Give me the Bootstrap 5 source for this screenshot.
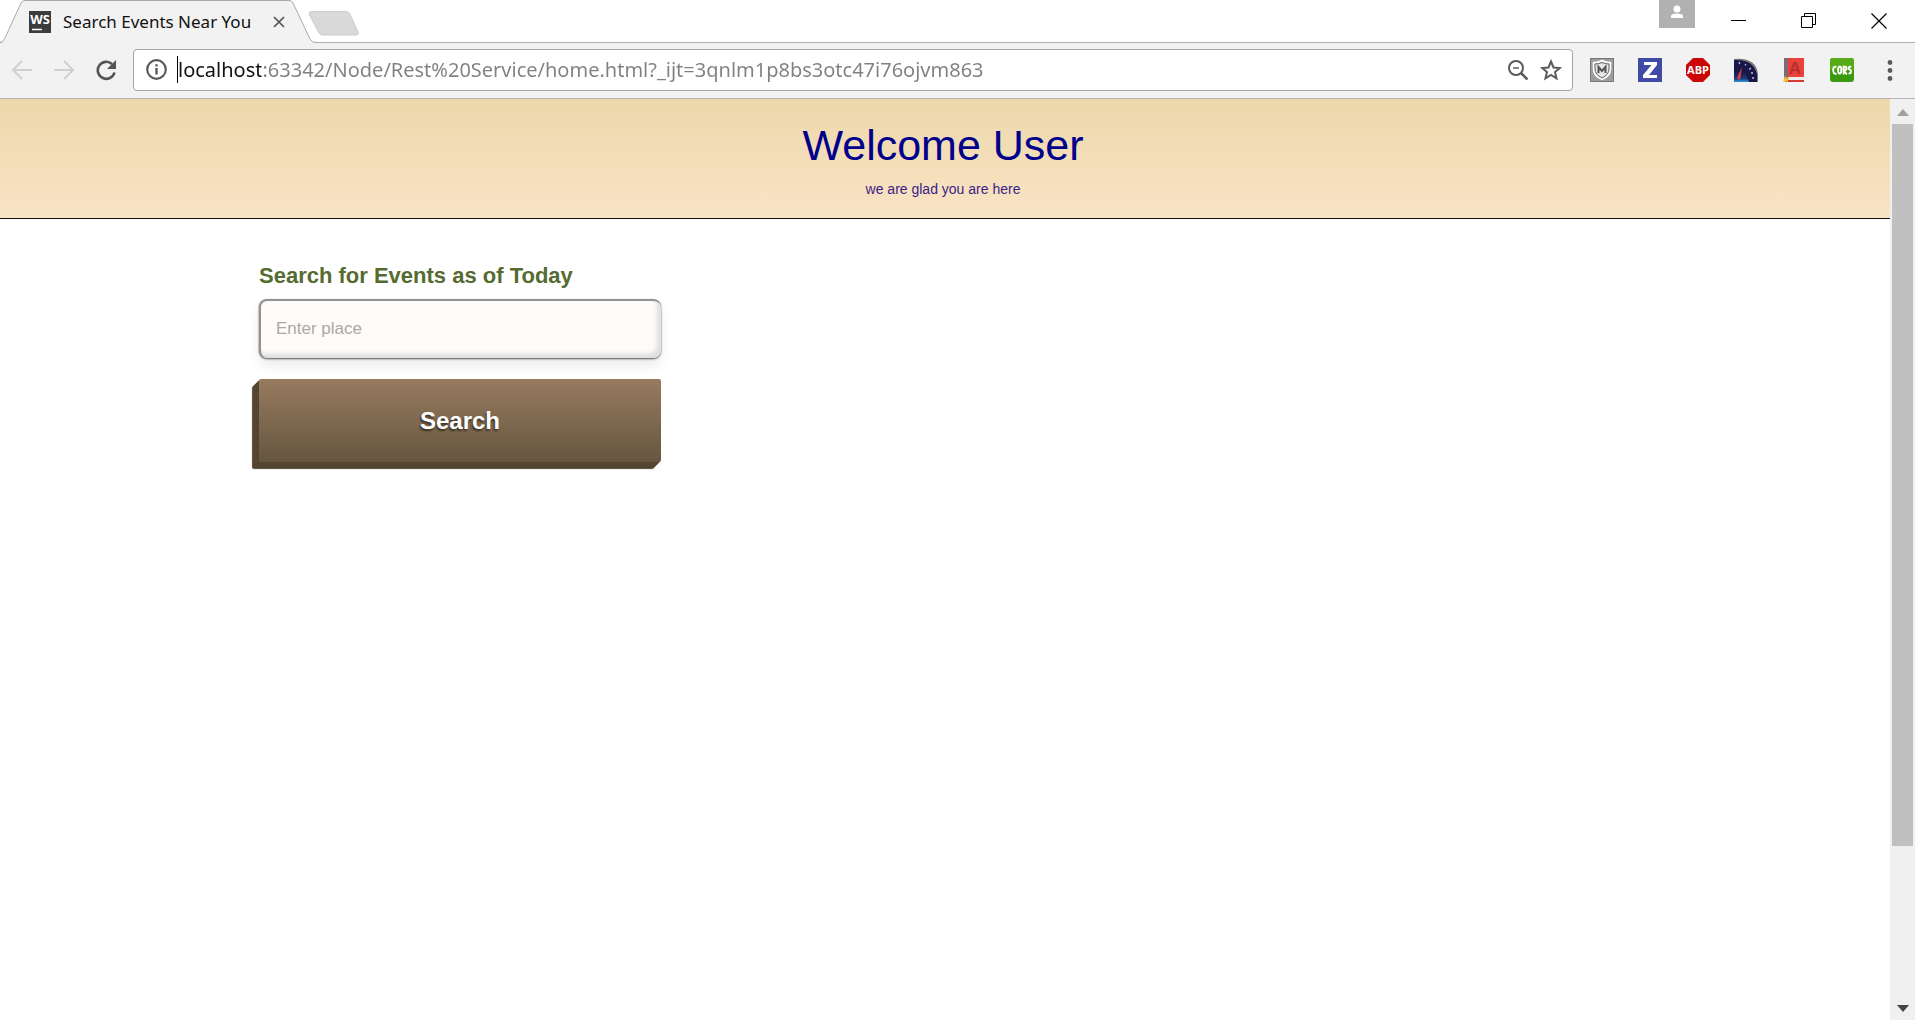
<!DOCTYPE html>
<html lang="en">
<head>
<meta charset="utf-8">
<meta name="viewport" content="width=device-width, initial-scale=1">
<title>Search Events Near You</title>
<link href="https://cdn.jsdelivr.net/npm/bootstrap@5.3.0/dist/css/bootstrap.min.css" rel="stylesheet">
<style>
body{font-family:"Liberation Sans",Arial,sans-serif;background:#fff}
button{border:0;background:none;padding:0}
svg{display:block}
.tab-strip{height:43px;border-bottom:1px solid #b0b0b0;background:#fff}
.page-tab{width:316px;height:43px;padding:0 31px 0 29px;font:17px/24px "Noto Sans",sans-serif;color:#111}
.tab-shape{position:absolute;left:0;top:0;z-index:0}
.page-tab>*:not(.tab-shape){position:relative;z-index:1}
.new-tab{margin:11px 0 0 -8px}
.profile{width:36px;height:28px;background:#b1b1b1}
.win-btns{gap:54px;padding:13px 28px 0 36px}
.toolbar{height:56px;background:#f2f2f2;border-bottom:1px solid #b5b5b5;padding:0 17px 2px 10px}
.nav-btns{gap:18px;width:123px}
.address{height:42px;border:1px solid #a5a5a5;border-radius:4px;background:#fff;padding:0 10px 0 12px}
.caret-bar{width:1px;height:27px;background:#000;margin-left:10px}
.url{border:0;outline:0;padding:0;height:34px;font:20px/34px "Noto Sans",sans-serif;color:transparent;background:linear-gradient(90deg,#111 83px,#808080 83px);-webkit-background-clip:text;background-clip:text}
.bar-icons{gap:12px}
.extensions{gap:24px;padding-left:17px}
.viewport-area{height:calc(100vh - 99px)}
.hero{height:120px;padding:20px 4px 0 0;background:linear-gradient(#edd8ab,#f9e3c6);border-bottom:1px solid #111;color:#00008b}
.hero h1{font-size:43px;line-height:52px;font-weight:400;margin:0}
.hero p{font-size:14px;line-height:20px;margin:8px 0 0;color:#3b1f85}
.page-wrap{max-width:1396px;padding-top:44px}
.search-form{max-width:402px}
.search-form label{font-size:22px;line-height:26px;font-weight:700;color:#556b2f;margin-bottom:10px;white-space:nowrap}
.place{display:block;width:100%;height:59px;padding:0 15px 2px;font-size:17px;color:#444;background:#fffbf8;border:solid #929295;border-width:2px 0 0 2px;border-radius:8px;outline:0;box-shadow:inset -4px -4px 5px #ddd,0 1px 2px #555,0 8px 12px rgba(0,0,0,.08)}
.place::placeholder{color:#a9a9a9}
.go{display:block;width:100%;height:83px;margin-top:21px;border-radius:2px;font-size:24px;font-weight:700;color:#fff;text-shadow:-1px 2px 2px #3d3225;background:linear-gradient(#977b5f,#665640);box-shadow:-1px 1px #534532,-2px 2px #534532,-3px 3px #534532,-4px 4px #534532,-5px 5px #534532,-6px 6px #534532,-7px 7px 1px #534532}
.scroller{width:25px;background:#f0f0f0;padding:10px 2px 8px}
.thumb{width:21px;background:#c0c0c0;margin-top:8px}
</style>
<script src="https://cdn.jsdelivr.net/npm/bootstrap@5.3.0/dist/js/bootstrap.bundle.min.js"></script>
</head>
<body class="overflow-hidden">
<header>
  <div class="tab-strip d-flex align-items-start">
    <div class="page-tab position-relative d-flex align-items-center flex-shrink-0">
      <svg class="tab-shape" width="316" height="43"><path d="M0 43Q4 43 6 38L21 3Q22.500 .5 25 .5H289Q292 .5 293 3L310 39Q312 42.500 316 43Z" fill="#f2f2f2"/><path d="M0 42.500Q3 42.500 5 38L21 3Q22.500 .5 25 .5H289Q292 .5 293 3L310 39Q312 42.500 316 42.500" fill="none" stroke="#a8a8a8"/></svg>
      <svg width="22" height="22" viewBox="0 0 22 22"><path fill="#3c3c3c" d="M0 0h22v22H0z"/><path d="M3 18.500h10" stroke="#fff" stroke-width="1.500"/><text x="11" y="13" text-anchor="middle" font-family="Open Sans" font-weight="bold" font-size="13" fill="#fff">WS</text></svg>
      <span class="flex-grow-1 text-nowrap ps-2 ms-1">Search Events Near You</span>
      <button aria-label="Close tab"><svg width="12" height="12"><path d="M1 1l10 10M11 1L1 11" stroke="#555" stroke-width="1.700"/></svg></button>
    </div>
    <button class="new-tab" aria-label="New tab"><svg width="52" height="25"><path d="M4 .5H38Q41 .5 42 3L50 21Q51 24 48 24H15Q12 24 11 22L1.500 4Q0 .5 4 .5Z" fill="#d9d9d9" stroke="#ccc"/></svg></button>
    <div class="ms-auto d-flex">
      <button class="profile d-flex justify-content-center" aria-label="Profile"><svg class="mt-1" width="14" height="16" viewBox="0 0 14 16" fill="#fff"><circle cx="7" cy="5" r="3.500"/><path d="M1 12Q1 9.500 7 9.500T13 12v2H1z"/></svg></button>
      <div class="win-btns d-flex align-items-start">
        <button aria-label="Minimize"><svg width="16" height="16"><path d="M0 7.500h15" stroke="#000"/></svg></button>
        <button aria-label="Restore"><svg width="16" height="16"><path d="M.5 3.500h11v11H.5zM3.500 3V.5h11v11H12" fill="none" stroke="#000"/></svg></button>
        <button aria-label="Close"><svg width="16" height="16"><path d="M.5.5l15 15m0-15l-15 15" stroke="#000" stroke-width="1.200"/></svg></button>
      </div>
    </div>
  </div>
  <div class="toolbar d-flex align-items-center">
    <div class="nav-btns d-flex align-items-center flex-shrink-0">
      <button aria-label="Back"><svg width="24" height="22" fill="none" stroke="#d0d0d0" stroke-width="2"><path d="M22 11H4M12 2l-9 9 9 9"/></svg></button>
      <button aria-label="Forward"><svg width="24" height="22" fill="none" stroke="#d0d0d0" stroke-width="2"><path d="M2 11h18M12 2l9 9-9 9"/></svg></button>
      <button aria-label="Reload"><svg width="24" height="22" viewBox="0 0 24 22"><path d="M20.500 13.500A8.500 8.500 0 1 1 18 5" fill="none" stroke="#555" stroke-width="2.600"/><path d="M22 1v9h-9z" fill="#555"/></svg></button>
    </div>
    <div class="address d-flex align-items-center flex-grow-1">
      <svg width="21" height="21" viewBox="0 0 21 21"><circle cx="10.500" cy="10.500" r="9.300" fill="none" stroke="#5a5a5a" stroke-width="2.200"/><path d="M9.300 5.300h2.400v2.300H9.300zM9.300 9h2.400v6.500H9.300z" fill="#5a5a5a"/></svg>
      <span class="caret-bar"></span>
      <input class="url flex-grow-1" type="text" aria-label="Address" spellcheck="false" value="localhost:63342/Node/Rest%20Service/home.html?_ijt=3qnlm1p8bs3otc47i76ojvm863">
      <div class="bar-icons d-flex align-items-center">
        <button aria-label="Zoom"><svg width="20" height="20" fill="none" stroke="#5a5a5a"><circle cx="8" cy="8" r="7" stroke-width="2"/><path d="M5 8h6" stroke-width="1.500"/><path d="M13 13l6.500 6.500" stroke-width="2.600"/></svg></button>
        <button aria-label="Bookmark"><svg width="22" height="22" viewBox="0 0 22 22"><path d="M11 2.500l2.500 6 6.300.5-4.800 4.100 1.500 6.200L11 16l-5.500 3.300L7 13.100 2.200 9l6.300-.5z" fill="none" stroke="#5a5a5a" stroke-width="2"/></svg></button>
      </div>
    </div>
    <div class="extensions d-flex align-items-center flex-shrink-0">
      <button aria-label="McAfee"><svg width="24" height="24"><path fill="#777" d="M0 0h24v24H0z"/><path fill="#9c9c9c" d="M1 1h22v22H1z"/><path d="M12 2.500Q16 4.500 20.500 4.500V11Q20.500 18 12 21.500Q3.500 18 3.500 11V4.500Q8 4.500 12 2.500Z" fill="#ddd" stroke="#fff" stroke-width="1.500"/><path d="M12 4.500Q15 6 19 6V11Q19 16.500 12 20Q5 16.500 5 11V6Q9 6 12 4.500Z" fill="#e5e5e5" stroke="#666"/><path d="M8.500 15V9l3.500 4 3.500-4v6" fill="none" stroke="#555" stroke-width="2"/></svg></button>
      <button aria-label="Zotero"><svg width="24" height="24"><path fill="#414aa5" d="M0 0h24v24H0z"/><path d="M6 4h13v3l-8 10h8v3H5v-3L13.500 7H6z" fill="#fff"/></svg></button>
      <button aria-label="Adblock Plus"><svg width="24" height="24"><path d="M7 0h10l7 7v10l-7 7H7l-7-7V7z" fill="#cc0505"/><text x="12" y="16" text-anchor="middle" font-family="Open Sans" font-weight="bold" font-size="11" fill="#fff">ABP</text></svg></button>
      <button aria-label="Speed test"><svg width="24" height="24"><defs><linearGradient id="dial" x2="0" y2="1"><stop stop-color="#15154e"/><stop offset=".7" stop-color="#1b3a78"/><stop offset="1" stop-color="#2a9de0"/></linearGradient></defs><path d="M0 1Q22-1 24 16V24H0Z" fill="#777"/><path d="M0 2Q20 1 23 17V24H0Z" fill="#171748"/><path d="M0 24V13Q11 11 15 24Z" fill="url(#dial)"/><path d="M5 4l.7 2M12 6l-1 1.500M17 10l-2 1.500M19 15h-2M20 20h-2" stroke="#b9bfe8" stroke-width="1.300"/><path d="M8 9L3 20l3 2z" fill="#f23b3b"/></svg></button>
      <button aria-label="Dictionary"><svg width="24" height="24"><path d="M2 0h20v19H2z" fill="#e9413b"/><path d="M2 0h4v23H2z" fill="#7b6d72"/><path d="M6 19h16v3H6z" fill="#eee"/><path d="M5 22h17v2H3z" fill="#d63b32"/><path d="M3 18l2 2h3l-2 2v2l-2-1-3 1 1-3z" fill="#f6c02c"/><text x="13" y="16" text-anchor="middle" font-family="Liberation Sans" font-weight="bold" font-size="17" fill="#b82f2b">A</text></svg></button>
      <button aria-label="CORS"><svg width="24" height="24"><rect width="24" height="24" rx="3" fill="#3b9a10"/><path d="M0 12V3q0-3 3-3h18q3 0 3 3v9z" fill="#57ab17"/><g fill="none" stroke="#fff" stroke-width="1.900"><path d="M6.500 9Q3.200 7.500 3.200 12T6.500 15.500"/><ellipse cx="9.700" cy="12" rx="1.600" ry="3.500"/><path d="M13.600 16.500V8.800h1.400q1.500 0 1.500 1.700T15 12.300h-1.200L16.800 16.500M21.200 9q-2.500-.8-2.500 1t2.200 2.400q.8 3.400-2.400 2.900"/></g></svg></button>
      <button aria-label="Menu"><svg width="20" height="24" fill="#5a5a5a"><circle cx="12" cy="4.500" r="2.400"/><circle cx="12" cy="12.500" r="2.400"/><circle cx="12" cy="20.500" r="2.400"/></svg></button>
    </div>
  </div>
</header>
<div class="viewport-area d-flex">
  <main class="flex-grow-1">
    <section class="hero text-center">
      <h1>Welcome User</h1>
      <p>we are glad you are here</p>
    </section>
    <div class="container-fluid page-wrap">
      <form class="search-form" onsubmit="return false">
        <label for="place" class="d-block">Search for Events as of Today</label>
        <input id="place" class="place" type="text" placeholder="Enter place">
        <button class="go" type="submit">Search</button>
      </form>
    </div>
  </main>
  <div class="scroller d-flex flex-column align-items-center" aria-hidden="true">
    <svg width="12" height="7"><path d="M0 7l6-7 6 7z" fill="#a0a0a0"/></svg>
    <div class="thumb" style="height:80%"></div>
    <svg class="mt-auto" width="12" height="7"><path d="M0 0h12L6 7z" fill="#444"/></svg>
  </div>
</div>
</body>
</html>
